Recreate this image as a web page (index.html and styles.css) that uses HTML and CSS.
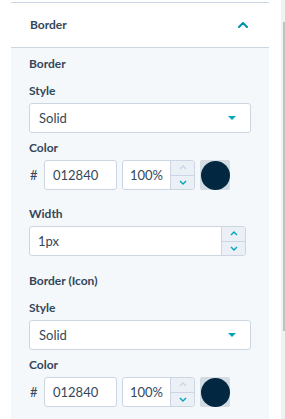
FILE: index.html
```html
<!DOCTYPE html>
<html lang="en">
<head>
    <meta charset="UTF-8">
    <meta name="viewport" content="width=device-width, initial-scale=1.0">
    <title>Border settings</title>
    <link rel="stylesheet" href="styles.css">
</head>
<body>
    <div class="app">
        <div class="panel">
            <div class="accordion-header">
                <span class="title">Border</span>
                <svg class="chevron" width="10" height="6" viewBox="0 0 10 6"><polyline points="1,5 5,1 9,5" fill="none" stroke="#0091ae" stroke-width="2" stroke-linecap="round" stroke-linejoin="round"/></svg>
            </div>
            <div class="accordion-body">
                <div class="section-title">Border</div>

                <div class="field">
                    <label>Style</label>
                    <div class="select"><span>Solid</span><span class="caret"></span></div>
                </div>

                <div class="field field-color">
                    <label>Color</label>
                    <div class="color-row">
                        <span class="hash">#</span>
                        <div class="input hex">012840</div>
                        <div class="input pct">
                            <span class="value">100%</span>
                            <div class="stepper">
                                <div class="step"><svg width="8" height="5" viewBox="0 0 8 5"><polyline points="1,4 4,1 7,4" fill="none" stroke="#cbd6e2" stroke-width="1.4"/></svg></div>
                                <div class="step"><svg width="8" height="5" viewBox="0 0 8 5"><polyline points="1,1 4,4 7,1" fill="none" stroke="#00a4bd" stroke-width="1.4"/></svg></div>
                            </div>
                        </div>
                        <div class="swatch"><div class="dot"></div></div>
                    </div>
                </div>

                <div class="field field-width">
                    <label>Width</label>
                    <div class="input width">
                        <span class="value">1px</span>
                        <div class="stepper">
                            <div class="step"><svg width="8" height="5" viewBox="0 0 8 5"><polyline points="1,4 4,1 7,4" fill="none" stroke="#00a4bd" stroke-width="1.4"/></svg></div>
                            <div class="step"><svg width="8" height="5" viewBox="0 0 8 5"><polyline points="1,1 4,4 7,1" fill="none" stroke="#00a4bd" stroke-width="1.4"/></svg></div>
                        </div>
                    </div>
                </div>

                <div class="section-title">Border (Icon)</div>

                <div class="field">
                    <label>Style</label>
                    <div class="select"><span>Solid</span><span class="caret"></span></div>
                </div>

                <div class="field field-color">
                    <label>Color</label>
                    <div class="color-row">
                        <span class="hash">#</span>
                        <div class="input hex">012840</div>
                        <div class="input pct">
                            <span class="value">100%</span>
                            <div class="stepper">
                                <div class="step"><svg width="8" height="5" viewBox="0 0 8 5"><polyline points="1,4 4,1 7,4" fill="none" stroke="#cbd6e2" stroke-width="1.4"/></svg></div>
                                <div class="step"><svg width="8" height="5" viewBox="0 0 8 5"><polyline points="1,1 4,4 7,1" fill="none" stroke="#00a4bd" stroke-width="1.4"/></svg></div>
                            </div>
                        </div>
                        <div class="swatch"><div class="dot"></div></div>
                    </div>
                </div>
            </div>
        </div>
        <div class="scrollbar"><div class="thumb"></div></div>
    </div>
</body>
</html>
```

FILE: styles.css
```css
body {
    margin: 0;
    font-family: Lato, "Liberation Sans", sans-serif;
    color: #33475b;
    background-color: #fff;
    overflow: hidden;
}
.app {
    display: flex;
    height: 419px;
}
.panel {
    margin-left: 11px;
    margin-top: 2px;
    width: 258px;
    display: flex;
    flex-direction: column;
    overflow: hidden;
}
.accordion-header {
    flex-shrink: 0;
    height: 44px;
    border-top: 1px solid #cbd6e2;
    border-bottom: 1px solid #cbd6e2;
    display: flex;
    align-items: center;
    justify-content: space-between;
    padding: 0 21px 0 19px;
    background-color: #fff;
}
.title, .section-title, label {
    font-size: 12px;
    font-weight: 700;
    line-height: 16px;
}
.accordion-body {
    flex: 1 0 auto;
    background-color: #f5f8fa;
    padding: 8px 18px 0;
}
.section-title {
    margin-bottom: 11px;
}
label {
    display: block;
    margin-bottom: 4px;
}
.field {
    margin-bottom: 7px;
}
.field-color {
    margin-bottom: 16px;
}
.field-width {
    margin-bottom: 17px;
}
.select, .input {
    box-sizing: border-box;
    height: 30px;
    background-color: #fff;
    border: 1px solid #cbd6e2;
    border-radius: 3px;
    font-size: 13px;
    display: flex;
    align-items: center;
}
.select {
    justify-content: space-between;
    padding: 0 14px 0 9px;
}
.caret {
    width: 0;
    height: 0;
    border-left: 4px solid transparent;
    border-right: 4px solid transparent;
    border-top: 4px solid #00a4bd;
}
.color-row {
    display: flex;
    align-items: center;
}
.hash {
    font-size: 13px;
    width: 14px;
    padding-left: 1px;
}
.hex {
    width: 73px;
    padding-left: 8px;
    margin-right: 5px;
}
.pct {
    width: 73px;
    padding-left: 7px;
    margin-right: 5px;
    overflow: hidden;
}
.width {
    width: 217px;
    padding-left: 8px;
    overflow: hidden;
}
.value {
    flex: 1;
}
.stepper {
    width: 23px;
    height: 100%;
    display: flex;
    flex-direction: column;
    background-color: #eaf0f6;
    border-left: 1px solid #cbd6e2;
}
.step {
    flex: 1;
    display: flex;
    align-items: center;
    justify-content: center;
}
.step:first-child {
    border-bottom: 1px solid #cbd6e2;
}
.swatch {
    width: 30px;
    height: 30px;
    background-color: #d3dbe3;
    border-radius: 2px;
    display: flex;
    align-items: center;
    justify-content: center;
}
.dot {
    width: 29px;
    height: 29px;
    border-radius: 50%;
    background-color: #012840;
}
.scrollbar {
    margin-left: 12px;
    width: 4px;
    background-color: #f1f1f1;
    padding-top: 22px;
}
.thumb {
    margin-left: 2px;
    width: 2px;
    height: 309px;
    background-color: #c1c1c1;
}
```
